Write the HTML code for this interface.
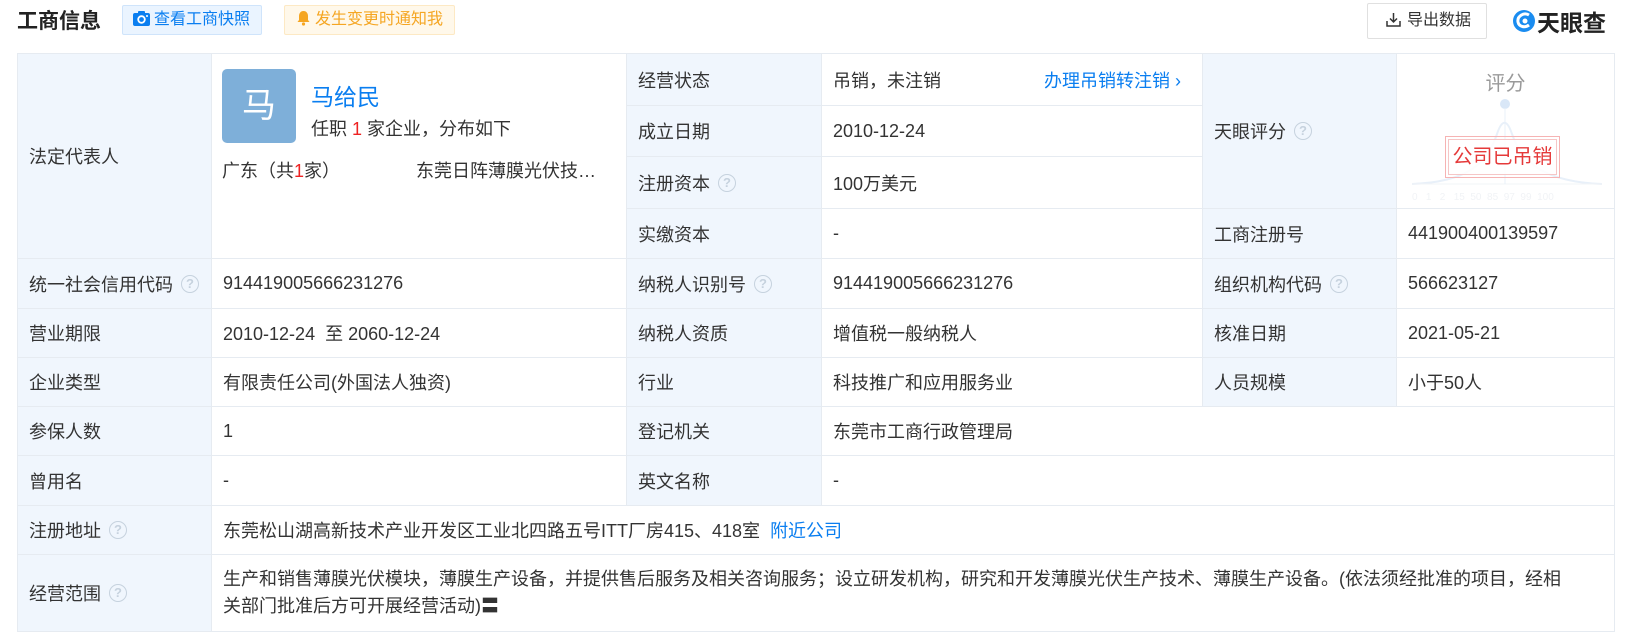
<!DOCTYPE html>
<html><head><meta charset="utf-8">
<style>
*{margin:0;padding:0;box-sizing:border-box}
body{width:1625px;height:642px;background:#fff;font-family:"Liberation Sans","Noto Sans CJK SC",sans-serif;color:#333;position:relative;overflow:hidden}
.c{position:absolute;border-right:1px solid #e6ebf1;border-bottom:1px solid #e6ebf1;font-size:18px;display:flex;align-items:center;padding-left:11px;white-space:nowrap}
.l{background:#f0f6fd}
.q{display:inline-block;width:18px;height:18px;border:1.5px solid #c6d2de;border-radius:50%;color:#c6d2de;font-size:13px;line-height:15px;text-align:center;margin-left:8px;font-weight:bold}
.blue{color:#0a7ef0}
.top{position:absolute}
</style></head><body>

<div class="top" style="left:17px;top:7px;font-size:21px;font-weight:bold;color:#222;line-height:30px">工商信息</div>
<div class="top" style="left:122px;top:5px;width:140px;height:30px;background:#eaf4ff;border:1px solid #cfe4fb;border-radius:2px;font-size:16px;color:#0a7ef0;line-height:28px;padding-left:10px">
<svg width="17" height="15" viewBox="0 0 17 15" style="vertical-align:-2px;margin-right:4px"><rect x="0" y="2" width="17" height="13" rx="2" fill="#0a7ef0"/><rect x="5" y="0" width="7" height="4" rx="1" fill="#0a7ef0"/><circle cx="8.5" cy="8.5" r="3.3" fill="none" stroke="#fff" stroke-width="1.8"/><circle cx="14" cy="5" r="1" fill="#fff"/></svg>查看工商快照</div>
<div class="top" style="left:284px;top:5px;width:171px;height:30px;background:#fff8ea;border:1px solid #fde9c4;border-radius:2px;font-size:16px;color:#f5a623;line-height:28px;padding-left:12px">
<svg width="13" height="16" viewBox="0 0 13 16" style="vertical-align:-2px;margin-right:5px"><path d="M6.5 1C3.5 1 2 3.5 2 6v4L0.5 12h12L11 10V6C11 3.5 9.5 1 6.5 1z" fill="#f5a623"/><circle cx="6.5" cy="14" r="1.6" fill="#f5a623"/></svg>发生变更时通知我</div>

<div class="top" style="left:1367px;top:3px;width:120px;height:36px;border:1px solid #e0e0e0;border-radius:2px;font-size:16px;color:#333;line-height:34px;padding-left:18px">
<svg width="15" height="15" viewBox="0 0 15 15" style="vertical-align:-2px;margin-right:6px"><path d="M7.5 1v9M4 6.5l3.5 3.5 3.5-3.5M1 9v5h13V9" fill="none" stroke="#333" stroke-width="1.5"/></svg>导出数据</div>
<div class="top" style="left:1512px;top:7px;height:28px;display:flex;align-items:center">
<svg width="24" height="24" viewBox="0 0 24 24"><circle cx="12" cy="12" r="11" fill="#1a8cf0"/><path d="M17 6C12 3 5 7 6 13c1 5 7 6 11 3" fill="none" stroke="#fff" stroke-width="3"/><circle cx="13" cy="12" r="2.5" fill="#fff"/></svg>
<span style="font-size:23px;font-weight:bold;color:#222;margin-left:1px">天眼查</span></div>

<div style="position:absolute;left:17px;top:53px;width:1598px;height:579px;border-top:1px solid #e6ebf1;border-left:1px solid #e6ebf1"></div>

<div class="c l" style="left:17px;top:53px;width:195px;height:206px;border-left:1px solid #e6ebf1;border-top:1px solid #e6ebf1">法定代表人</div>
<div class="c" style="left:212px;top:53px;width:415px;height:206px;border-top:1px solid #e6ebf1;display:block;padding:0">
 <div style="position:absolute;left:10px;top:15px;width:74px;height:74px;background:#7eafd9;border-radius:5px;color:#fff;font-size:34px;text-align:center;line-height:74px">马</div>
 <div style="position:absolute;left:99px;top:24px;font-size:23px;color:#0a7ef0">马给民</div>
 <div style="position:absolute;left:99px;top:61px;font-size:18px">任职 <span style="color:#e22">1</span> 家企业，分布如下</div>
 <div style="position:absolute;left:10px;top:103px;font-size:18px">广东（共<span style="color:#e22">1</span>家）</div>
 <div style="position:absolute;left:204px;top:103px;font-size:18px">东莞日阵薄膜光伏技…</div>
</div>
<div class="c l" style="left:627px;top:53px;width:195px;height:53px;border-top:1px solid #e6ebf1">经营状态</div>
<div class="c" style="left:822px;top:53px;width:381px;height:53px;border-top:1px solid #e6ebf1">吊销，未注销<span class="blue" style="position:absolute;left:222px">办理吊销转注销 ›</span></div>
<div class="c l" style="left:627px;top:106px;width:195px;height:51px">成立日期</div>
<div class="c" style="left:822px;top:106px;width:381px;height:51px">2010-12-24</div>
<div class="c l" style="left:627px;top:157px;width:195px;height:52px">注册资本<span class="q">?</span></div>
<div class="c" style="left:822px;top:157px;width:381px;height:52px">100万美元</div>
<div class="c l" style="left:627px;top:209px;width:195px;height:50px">实缴资本</div>
<div class="c" style="left:822px;top:209px;width:381px;height:50px">-</div>
<div class="c l" style="left:1203px;top:53px;width:194px;height:156px;border-top:1px solid #e6ebf1">天眼评分<span class="q">?</span></div>
<div class="c" style="left:1397px;top:53px;width:218px;height:156px;border-top:1px solid #e6ebf1;display:block;padding:0">
 <div style="position:absolute;left:0;width:100%;top:13px;text-align:center;font-size:20px;color:#9a9a9a">评分</div>
 <svg style="position:absolute;left:10px;top:40px" width="200" height="110" viewBox="0 0 200 110"><path d="M5 90 C60 88 80 70 90 40 C95 25 100 25 105 40 C115 70 140 88 195 90" fill="none" stroke="#e8f0f9" stroke-width="2"/><line x1="5" y1="90" x2="195" y2="90" stroke="#f2f4f7"/><circle cx="98" cy="10" r="5" fill="#d9e7f7"/><line x1="98" y1="14" x2="98" y2="90" stroke="#e8f0f9"/><text x="5" y="106" font-size="10" fill="#f1f3f6" font-family="Liberation Sans">0 &#160; 1 &#160; 2 &#160; 15 &#160;50 &#160;85 &#160;97 &#160;99 &#160;100</text></svg>
 <div style="position:absolute;left:48px;top:82px;width:115px;height:42px;border:1px solid #f6b3b3;padding:2px"><div style="border:1px solid #f6c6c6;height:100%;background:rgba(255,255,255,.85);text-align:center;font-size:20px;color:#e53a3a;line-height:34px">公司已吊销</div></div>
</div>
<div class="c l" style="left:1203px;top:209px;width:194px;height:50px">工商注册号</div>
<div class="c" style="left:1397px;top:209px;width:218px;height:50px">441900400139597</div>

<div class="c l" style="left:17px;top:259px;width:195px;height:50px;border-left:1px solid #e6ebf1">统一社会信用代码<span class="q">?</span></div>
<div class="c" style="left:212px;top:259px;width:415px;height:50px">914419005666231276</div>
<div class="c l" style="left:627px;top:259px;width:195px;height:50px">纳税人识别号<span class="q">?</span></div>
<div class="c" style="left:822px;top:259px;width:381px;height:50px">914419005666231276</div>
<div class="c l" style="left:1203px;top:259px;width:194px;height:50px">组织机构代码<span class="q">?</span></div>
<div class="c" style="left:1397px;top:259px;width:218px;height:50px">566623127</div>

<div class="c l" style="left:17px;top:309px;width:195px;height:49px;border-left:1px solid #e6ebf1">营业期限</div>
<div class="c" style="left:212px;top:309px;width:415px;height:49px">2010-12-24&nbsp; 至 2060-12-24</div>
<div class="c l" style="left:627px;top:309px;width:195px;height:49px">纳税人资质</div>
<div class="c" style="left:822px;top:309px;width:381px;height:49px">增值税一般纳税人</div>
<div class="c l" style="left:1203px;top:309px;width:194px;height:49px">核准日期</div>
<div class="c" style="left:1397px;top:309px;width:218px;height:49px">2021-05-21</div>

<div class="c l" style="left:17px;top:358px;width:195px;height:49px;border-left:1px solid #e6ebf1">企业类型</div>
<div class="c" style="left:212px;top:358px;width:415px;height:49px">有限责任公司(外国法人独资)</div>
<div class="c l" style="left:627px;top:358px;width:195px;height:49px">行业</div>
<div class="c" style="left:822px;top:358px;width:381px;height:49px">科技推广和应用服务业</div>
<div class="c l" style="left:1203px;top:358px;width:194px;height:49px">人员规模</div>
<div class="c" style="left:1397px;top:358px;width:218px;height:49px">小于50人</div>

<div class="c l" style="left:17px;top:407px;width:195px;height:49px;border-left:1px solid #e6ebf1">参保人数</div>
<div class="c" style="left:212px;top:407px;width:415px;height:49px">1</div>
<div class="c l" style="left:627px;top:407px;width:195px;height:49px">登记机关</div>
<div class="c" style="left:822px;top:407px;width:793px;height:49px">东莞市工商行政管理局</div>

<div class="c l" style="left:17px;top:456px;width:195px;height:50px;border-left:1px solid #e6ebf1">曾用名</div>
<div class="c" style="left:212px;top:456px;width:415px;height:50px">-</div>
<div class="c l" style="left:627px;top:456px;width:195px;height:50px">英文名称</div>
<div class="c" style="left:822px;top:456px;width:793px;height:50px">-</div>

<div class="c l" style="left:17px;top:506px;width:195px;height:49px;border-left:1px solid #e6ebf1">注册地址<span class="q">?</span></div>
<div class="c" style="left:212px;top:506px;width:1403px;height:49px">东莞松山湖高新技术产业开发区工业北四路五号ITT厂房415、418室&nbsp;&nbsp;<span class="blue">附近公司</span></div>

<div class="c l" style="left:17px;top:555px;width:195px;height:77px;border-left:1px solid #e6ebf1">经营范围<span class="q">?</span></div>
<div class="c" style="left:212px;top:555px;width:1403px;height:77px;white-space:normal;line-height:27px;padding-right:45px">生产和销售薄膜光伏模块，薄膜生产设备，并提供售后服务及相关咨询服务；设立研发机构，研究和开发薄膜光伏生产技术、薄膜生产设备。(依法须经批准的项目，经相关部门批准后方可开展经营活动)〓</div>
</body></html>
